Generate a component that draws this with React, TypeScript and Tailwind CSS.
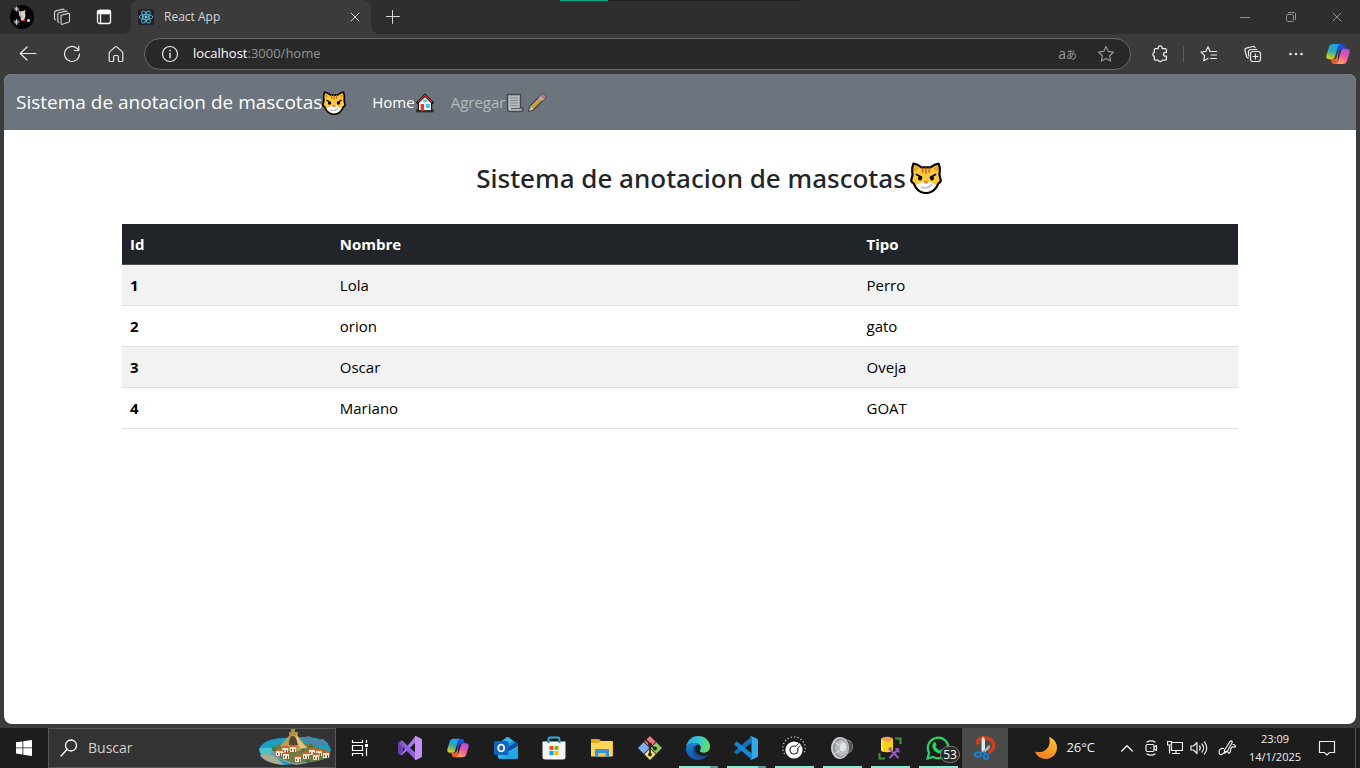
import React from "react";

type IconProps = { className?: string };

const line = {
  fill: "none",
  stroke: "currentColor",
  strokeLinecap: "round" as const,
  strokeLinejoin: "round" as const,
};

/* ---------- Emoji drawings ---------- */

function CatEmoji({ className }: IconProps) {
  return (
    <svg viewBox="0 0 32 32" className={className} role="img" aria-label="gato">
      <path
        d="M3.4 1.6C2 5 2 9 2.6 12.2L1.2 18.6c.4 1.4 1.4 2.2 2.4 2.8C6 27.4 10.800 31 16 31s10-3.600 12.400-9.600c1-.6 2-1.400 2.400-2.800l-1.400-6.400C30 9 30 5 28.600 1.600c-3.200.2-6 2-8.200 3.800h-8.800C9.400 3.600 6.600 1.800 3.400 1.600Z"
        fill="#ffc83d"
        stroke="#000"
        strokeWidth="2.200"
        strokeLinejoin="round"
      />
      <path d="M4.600 3.400c-.6 2.600-.5 4.600-.1 6.600L9 6.300C7.600 5 6.200 4 4.600 3.400ZM27.400 3.400c.6 2.600.5 4.600.1 6.600L23 6.300c1.400-1.300 2.800-2.300 4.400-2.900Z" fill="#f59f1e" />
      <path d="M16 19.500c2 0 3.600 0 5 1 2 1.400 3.800 1.600 5 2.400C23.600 27.400 20 29.800 16 29.800S8.400 27.400 6 22.900c1.200-.8 3-1 5-2.400 1.400-1 3-1 5-1Z" fill="#fff" />
      <path d="M16 6v5M12.400 6l.4 4M19.600 6l-.4 4" stroke="#c4701b" strokeWidth="1.700" strokeLinecap="round" />
      <path d="M6.500 12.500l5 2.800M25.500 12.500l-5 2.800" stroke="#000" strokeWidth="1.700" strokeLinecap="round" />
      <ellipse cx="10" cy="16.200" rx="1.900" ry="2.200" fill="#000" />
      <ellipse cx="22" cy="16.200" rx="1.900" ry="2.200" fill="#000" />
      <path d="M13.600 19h4.800c0 1.700-1.100 2.700-2.400 2.700s-2.400-1-2.400-2.700Z" fill="#f5793b" />
      <path d="M11.500 25.200c3.800 1.300 7.800.4 10-2.500" fill="none" stroke="#c4c4c4" strokeWidth="1.800" strokeLinecap="round" />
    </svg>
  );
}

function HouseEmoji({ className }: IconProps) {
  return (
    <svg viewBox="0 0 18 18" className={className} role="img" aria-label="casa">
      <path d="M1.500 15.200h15v1.800h-15z" fill="#16a316" stroke="#000" strokeWidth=".6" />
      <path d="M3 8.500 9 3l6 5.500V16H3Z" fill="#fff" stroke="#000" strokeWidth="1" />
      <path d="M2.200 8.600 9 2l6.800 6.600" fill="none" stroke="#000" strokeWidth="2.200" strokeLinecap="round" />
      <path d="M2.500 8.300 9 2.100l6.500 6.200" fill="none" stroke="#f03a32" strokeWidth="1" />
      <path d="M7.400 5.800h3.200v2.600H7.400zM9.600 10h3.800v3.500H9.600z" fill="#38c9f5" />
      <path d="M5 10h3.200v6H5z" fill="#e33b2e" />
    </svg>
  );
}

function PageEmoji({ className }: IconProps) {
  return (
    <svg viewBox="0 0 18 20" className={className} role="img" aria-label="página">
      <path d="M1.500 1.500h13V15H17c0 2-.6 3.500-2 3.500H4c-1.600 0-2.500-1-2.500-3Z" fill="#b6babd" stroke="#44494e" strokeWidth="1.400" strokeLinejoin="round" />
      <path d="M4 5h8M4 7.500h8M4 10h8M4 12.500h8" stroke="#878d92" strokeWidth="1" />
      <path d="M5 15.500h11.500" stroke="#555b60" strokeWidth="1.200" />
    </svg>
  );
}

function PencilEmoji({ className }: IconProps) {
  return (
    <svg viewBox="0 0 20 20" className={className} role="img" aria-label="lápiz">
      <path d="M1.500 18.500 3.200 13 14.500 1.700c1-.9 2.500-.7 3.300.3.900.9.900 2.100.2 3.200L7 16.600Z" fill="#cb9b3c" stroke="#44494e" strokeWidth="1.400" strokeLinejoin="round" />
      <path d="m13 3.200 3.500 3.500L18 5.200c.9-1.200.6-2.300-.2-3.200-.9-.9-2.200-1.100-3.300-.3Z" fill="#c6747c" />
      <path d="m12 4.200 3.600 3.600 1.300-1.400-3.500-3.500Z" fill="#aeb4b9" />
      <path d="M2 18 3.500 13.500l3 2.900Z" fill="#d4bd94" />
      <path d="m4 13.800 9-9" stroke="#e5b952" strokeWidth="1" />
    </svg>
  );
}

/* ---------- Browser drawings ---------- */

function Avatar({ className }: IconProps) {
  return (
    <svg viewBox="0 0 24 24" className={className} aria-hidden="true">
      <circle cx="12" cy="12" r="12" fill="#000" />
      <path d="m8.500 5 2 1.500L13 6l2.500-1-.5 3 .5 3-1.500 4.500h-3l-.5-3.500L9 10Z" fill="#d9d2cd" />
      <path d="m9.500 6.500 1.500 4 2 2" stroke="#987" fill="none" strokeWidth=".8" />
      <path d="M12 15.800h3.500" stroke="#c92b2b" strokeWidth="1.200" />
      <path d="M6.500 1.500v5M4 4h5M4.800 2.300l3.400 3.400M8.200 2.300 4.800 5.700M6.500 14v6M3.500 17h6M4.400 15l4.200 4.200M8.600 15l-4.200 4.200" stroke="#cfd0ee" strokeWidth=".9" />
      <circle cx="18.500" cy="15.500" r="1.500" fill="#dfdff2" />
    </svg>
  );
}

function WorkspacesIcon({ className }: IconProps) {
  return (
    <svg viewBox="0 0 18 18" className={className} aria-hidden="true" {...line} strokeWidth="1.100">
      <path d="m8 7.200 7.200-1.800c.8-.2 1.300.2 1.300 1v6.700c0 .6-.3 1-.9 1.200l-6.300 2c-.8.200-1.300-.2-1.300-1Z" />
      <path d="M5.800 14.200c-.6 0-1-.4-1-1V6.500c0-.9.400-1.500 1.300-1.700l6.600-1.700c.7-.1 1.100.1 1.300.5M2.700 11.800c-.8 0-1.200-.5-1.200-1.300V4.700c0-1 .5-1.600 1.400-1.800l6.800-1.700c.7-.1 1.100.1 1.300.5" />
    </svg>
  );
}

function TabActionsIcon({ className }: IconProps) {
  return (
    <svg viewBox="0 0 16 16" className={className} aria-hidden="true" {...line} strokeWidth="1.300">
      <rect x="1.500" y="1.500" width="13" height="13" rx="2" />
      <path d="M1.500 3c0-1 .6-1.500 1.500-1.500h10c1 0 1.500.6 1.500 1.500v1.500h-13Z" fill="currentColor" />
      <path d="M4.500 5v9" />
    </svg>
  );
}

function ReactLogo({ className }: IconProps) {
  return (
    <svg viewBox="0 0 16 16" className={className} aria-hidden="true">
      <rect width="16" height="16" rx="1.500" fill="#20232a" />
      <g fill="none" stroke="#53b9d4" strokeWidth=".9">
        <ellipse cx="8" cy="8" rx="6.800" ry="2.600" />
        <ellipse cx="8" cy="8" rx="6.800" ry="2.600" transform="rotate(60 8 8)" />
        <ellipse cx="8" cy="8" rx="6.800" ry="2.600" transform="rotate(120 8 8)" />
      </g>
      <circle cx="8" cy="8" r="1.400" fill="#61dafb" />
    </svg>
  );
}

function CloseIcon({ className }: IconProps) {
  return (
    <svg viewBox="0 0 12 12" className={className} aria-hidden="true" {...line} strokeWidth="1">
      <path d="m2 2 8 8m0-8-8 8" />
    </svg>
  );
}

function PlusIcon({ className }: IconProps) {
  return (
    <svg viewBox="0 0 14 14" className={className} aria-hidden="true" {...line} strokeWidth="1">
      <path d="M6.500.5v13M0 6.500h13.500" />
    </svg>
  );
}

function MinimizeIcon({ className }: IconProps) {
  return (
    <svg viewBox="0 0 12 12" className={className} aria-hidden="true" {...line} strokeLinecap="butt">
      <path d="M1 6.500h10" />
    </svg>
  );
}

function RestoreIcon({ className }: IconProps) {
  return (
    <svg viewBox="0 0 12 12" className={className} aria-hidden="true" {...line}>
      <rect x="1.500" y="3.500" width="7" height="7" rx="1" />
      <path d="M3.500 1.500H9c1 0 1.500.5 1.500 1.500v5.500" />
    </svg>
  );
}

function BackIcon({ className }: IconProps) {
  return (
    <svg viewBox="0 0 18 18" className={className} aria-hidden="true" {...line} strokeWidth="1.200">
      <path d="M17 8.500H1.500M8 2 1.300 8.500 8 15" />
    </svg>
  );
}

function ReloadIcon({ className }: IconProps) {
  return (
    <svg viewBox="0 0 18 18" className={className} aria-hidden="true" {...line} strokeWidth="1.200">
      <path d="M16.500 9A7.500 7.500 0 1 1 13.800 3.200L15.500 5M15.800 1v4.500h-4.500" />
    </svg>
  );
}

function HomeIcon({ className }: IconProps) {
  return (
    <svg viewBox="0 0 18 18" className={className} aria-hidden="true" {...line} strokeWidth="1.200">
      <path d="M2.200 8c0-.6.200-1 .7-1.400L8.200 1.900c.5-.4 1.100-.4 1.600 0l5.300 4.700c.5.400.7.800.7 1.400v7.400c0 .7-.4 1.100-1.100 1.100h-2.400c-.6 0-.9-.3-.9-.9V12c0-.9-.5-1.500-1.400-1.500H8c-.9 0-1.400.6-1.400 1.500v3.600c0 .6-.3.9-.9.900H3.300c-.7 0-1.100-.4-1.100-1.100Z" />
    </svg>
  );
}

function InfoIcon({ className }: IconProps) {
  return (
    <svg viewBox="0 0 18 18" className={className} aria-hidden="true" {...line} strokeWidth="1.200">
      <circle cx="9" cy="9" r="7.500" />
      <path d="M9 8.200v4.600M9 5.300v.4" strokeWidth="1.400" />
    </svg>
  );
}

function StarIcon({ className }: IconProps) {
  return (
    <svg viewBox="0 0 18 18" className={className} aria-hidden="true" {...line} strokeWidth="1.200">
      <path d="m9 1.500 2.300 4.900 5.200.7-3.800 3.700.9 5.300L9 13.500l-4.600 2.600.9-5.300L1.500 7.100l5.200-.7Z" />
    </svg>
  );
}

function PuzzleIcon({ className }: IconProps) {
  return (
    <svg viewBox="0 0 18 18" className={className} aria-hidden="true" {...line} strokeWidth="1.300">
      <path d="M4.500 3.700h2.700a2.100 2.100 0 1 1 4 0h3c.8 0 1.200.4 1.200 1.200v2.500h-1a1.900 1.900 0 0 0 0 3.800h1v2.700c0 .8-.4 1.200-1.200 1.200h-3a2.100 2.100 0 0 1-4 0H4.500c-.8 0-1.200-.4-1.200-1.200v-2.500a2.100 2.100 0 0 1 0-4V4.900c0-.8.400-1.200 1.200-1.200Z" />
    </svg>
  );
}

function FavoritesIcon({ className }: IconProps) {
  return (
    <svg viewBox="0 0 18 18" className={className} aria-hidden="true" {...line} strokeWidth="1.200">
      <path d="M16.500 6.500H10L8 1.800 5.900 6.300 1 7l3.600 3.600-.9 5.200L8 13.500M11 10h5.500M10.500 13.500h6" />
    </svg>
  );
}

function CollectionsIcon({ className }: IconProps) {
  return (
    <svg viewBox="0 0 18 18" className={className} aria-hidden="true" {...line} strokeWidth="1.200">
      <rect x="6.500" y="6.500" width="10" height="10" rx="2.200" />
      <path d="M11.500 9v5M9 11.500h5M4.500 13c-1 0-1.600-.5-1.900-1.500L1 5.500c-.3-1.200.2-2 1.300-2.300l6.500-1.700c1.100-.3 1.900.1 2.300 1.200M4.500 11V6.800c0-1.400.9-2.300 2.300-2.300H13" />
    </svg>
  );
}

function DotsIcon({ className }: IconProps) {
  return (
    <svg viewBox="0 0 16 16" className={className} aria-hidden="true" fill="currentColor">
      <circle cx="2.500" cy="8" r="1.300" />
      <circle cx="8" cy="8" r="1.300" />
      <circle cx="13.500" cy="8" r="1.300" />
    </svg>
  );
}

function CopilotLogo({ className, id }: IconProps & { id: string }) {
  return (
    <svg viewBox="0 0 24 24" className={className} aria-hidden="true">
      <defs>
        <linearGradient id={id + "a"} x1=".5" y1="0" x2=".2" y2="1">
          <stop offset="0" stopColor="#19a6e8" />
          <stop offset=".45" stopColor="#2ba9b5" />
          <stop offset=".7" stopColor="#86bf51" />
          <stop offset="1" stopColor="#f5cf1b" />
        </linearGradient>
        <linearGradient id={id + "b"} x1=".8" y1="0" x2=".3" y2="1">
          <stop offset="0" stopColor="#a84de0" />
          <stop offset=".5" stopColor="#ed5798" />
          <stop offset="1" stopColor="#ffa463" />
        </linearGradient>
      </defs>
      <path d="M12 2h4.300c1.200 0 1.900.8 2.300 2l1 3h-3c-1.500 0-2.500.7-3 2.200L12 14Z" fill="#1d4fd1" />
      <path d="M12 22H8c-1.300 0-2-.7-2.400-1.800l-1-3h3c1.500 0 2.500-.7 3-2.200L12 9.500Z" fill="#f0592f" />
      <path d="M6.800 2H14c-1.200.4-1.700 1.400-2.100 2.700L8.800 15c-.5 1.600-1.400 2.200-3 2.200H3.200C.8 17.200-.2 15.400.5 13L3 5c.6-2 1.800-3 3.800-3Z" fill={"url(#" + id + "a)"} />
      <path d="M17.200 22H10c1.200-.4 1.700-1.400 2.100-2.700L15.200 9c.5-1.600 1.400-2.200 3-2.200h2.600c2.400 0 3.400 1.800 2.700 4.200L21 19c-.6 2-1.800 3-3.800 3Z" fill={"url(#" + id + "b)"} />
    </svg>
  );
}

/* ---------- Taskbar drawings ---------- */

function WindowsLogo({ className }: IconProps) {
  return (
    <svg viewBox="0 0 16 16" className={className} aria-hidden="true" fill="#fff">
      <path d="M0 2.300 6.500 1.400v6.100H0ZM7.300 1.300 16 0v7.500H7.300ZM0 8.300h6.500v6.200L0 13.600ZM7.300 8.300H16V16l-8.700-1.300Z" />
    </svg>
  );
}

function SearchIcon({ className }: IconProps) {
  return (
    <svg viewBox="0 0 18 18" className={className} aria-hidden="true" {...line} strokeWidth="1.300">
      <circle cx="11" cy="6.500" r="5.500" />
      <path d="M7 10.500 1 17" />
    </svg>
  );
}

function VillagePicture({ className }: IconProps) {
  const houses = [
    [27, 18], [35, 17], [54, 20], [61, 21], [21, 21], [68, 23], [48, 24], [28, 24], [58, 25], [40, 27],
  ];
  return (
    <svg viewBox="0 0 74 38" className={className} aria-hidden="true">
      <path d="M1 20c3-7 12-10.500 24-11l23-1c14 0 23 5 25 13l-3 8-16 4-28 3C13 35 3 28 1 20Z" fill="#1aa0c2" />
      <path d="M1 20c5-2 13-1.500 18 0l-2 5-14 1Z" fill="#4cc2cf" />
      <path d="m43 9 8-2 7 4 7-1 6 5-16 3Z" fill="#4b86ab" />
      <path d="M2 26c6-2 11-1 15 1l9 9-8-1C9 33 4 30 2 26Z" fill="#a9ad94" />
      <path d="M12 22c4 6 12 11 26 14l12-2-26-12Z" fill="#7f9ba2" />
      <path d="m14 19 9-5h24l12 4 13 4v6l-12 4-24 2-14-5Z" fill="#6f7d45" />
      <path d="m22 17 6-7 4-4h7l4 5 6 8-12 4-10-2Z" fill="#bb9b58" />
      <path d="M31 3h2V0h4v3h3v3h-9Z" fill="#b48d3c" />
      <path d="M31 16c0-5 1-9 3.500-9s4.500 3 5.500 9Z" fill="#53472f" />
      <path d="M38 5c2 3 5 9 11 13l-6 2c-3-4-5-9-5-15Z" fill="#e0c67c" />
      {houses.map(([x, y]) => (
        <g key={x}>
          <path d={`M${x - 3} ${y + 1}h6v5h-6z`} fill="#ece1cb" />
          <path d={`m${x - 4} ${y + 1} 2.500-2h4l2 2z`} fill="#d0602f" />
          <path d={`M${x - 2} ${y + 3}h1v2h-1zM${x + 1} ${y + 3}h1v3h-1z`} fill="#72573f" />
        </g>
      ))}
      <circle cx="50" cy="32" r="1.800" fill="#3f6d32" />
      <circle cx="16" cy="20" r="2.200" fill="#487636" />
      <circle cx="53" cy="17" r="2" fill="#487636" />
      <circle cx="45" cy="21" r="1.800" fill="#487636" />
    </svg>
  );
}

function TaskViewIcon({ className }: IconProps) {
  return (
    <svg viewBox="0 0 18 18" className={className} aria-hidden="true" fill="none" stroke="#fff" strokeWidth="1.200">
      <path d="M1.500 1v2.500h10V1M1.500 17v-2.500h10V17M1.500 6.500h10v5h-10zM15.500 1v3M15.500 9v8" />
      <path d="M14 5h3v3h-3z" fill="#fff" stroke="none" />
    </svg>
  );
}

function VisualStudioLogo({ className }: IconProps) {
  return (
    <svg viewBox="0 0 24 24" className={className} aria-hidden="true">
      <path d="M0 6.500 2.500 5 5 6.200v11.300L2.500 19 0 17.500Z" fill="#6940a3" />
      <path d="M2.500 5c.8-.4 1.700-.2 2.500.5L18 17.500V24L2.500 9Z" fill="#8453ca" />
      <path d="M2.500 19 17 .5l1-.5v6L5 18.200c-1 .9-1.700 1.100-2.500.8Z" fill="#a577e8" />
      <path d="M2.500 5c.8-.4 1.700-.2 2.500.5L18 17.500v6.500l-1-.5Z" fill="#9261d6" />
      <path d="m18 0 5 2.400c.7.300 1 .8 1 1.500v16.200c0 .7-.3 1.200-1 1.500L18 24c-.8.200-1 0-1-.7V.7c0-.7.200-.9 1-.7Z" fill="#c490f6" />
    </svg>
  );
}

function OutlookLogo({ className }: IconProps) {
  return (
    <svg viewBox="0 0 24 24" className={className} aria-hidden="true">
      <path d="m4 8 8-6.500c.9-.6 1.600-.6 2.500 0L24 8v4L13 18 4 12Z" fill="#1490df" />
      <path d="m5 7.500 8-6c.7-.4 1.300-.4 2 0L19 5 9 12Z" fill="#36b9f0" />
      <path d="m22.500 6 1.500 2v5l-12 6-4-4Z" fill="#134b9f" />
      <path d="M4 12v9c0 1.300.7 2 2 2h16c1.300 0 2-.7 2-2V10l-12 7Z" fill="#2bc1ef" />
      <path d="M5 22.500 24 11v10c0 1.300-.7 2-2 2H6Z" fill="#1fa8e6" />
      <rect y="5" width="14.500" height="14" rx="1.500" fill="#0f65c0" />
      <ellipse cx="7.200" cy="12" rx="3" ry="3.500" fill="none" stroke="#fff" strokeWidth="1.700" />
    </svg>
  );
}

function StoreLogo({ className }: IconProps) {
  return (
    <svg viewBox="0 0 24 24" className={className} aria-hidden="true">
      <path d="M6.500 6V3c0-1 .5-1.500 1.500-1.500h8c1 0 1.500.5 1.500 1.500v3" fill="none" stroke="#29b4df" strokeWidth="1.800" />
      <path d="M.5 5.500h23V21c0 1.700-1 2.500-2.500 2.500H3C1.500 23.500.5 22.700.5 21Z" fill="#f5f5f5" />
      <path d="M7.500 10h4v4h-4z" fill="#f25022" />
      <path d="M12.500 10h4v4h-4z" fill="#7fba00" />
      <path d="M7.500 15h4v4h-4z" fill="#00a4ef" />
      <path d="M12.500 15h4v4h-4z" fill="#ffb900" />
      <path d="M6.500 5v2M17.500 5v2" stroke="#1685bb" strokeWidth="1.800" />
    </svg>
  );
}

function ExplorerLogo({ className }: IconProps) {
  return (
    <svg viewBox="0 0 24 24" className={className} aria-hidden="true">
      <path d="M1 3h8l2 2h11c.7 0 1 .4 1 1v14H1Z" fill="#e6a514" />
      <path d="M1 7h8l2-2h11.500v15.500H1Z" fill="#ffd45b" />
      <path d="M5 13h14v8h-3.500v-4h-7v4H5Z" fill="#3b93d7" />
      <path d="M8.500 17h7v3.500h-7z" fill="#f4c344" />
    </svg>
  );
}

function GitLogo({ className }: IconProps) {
  return (
    <svg viewBox="0 0 24 24" className={className} aria-hidden="true">
      <path d="m12 0 5.700 5.700-5.700 5.700-5.700-5.700Z" fill="#f17678" />
      <path d="m18.300 6.300 5.700 5.700-5.700 5.700-5.700-5.700Z" fill="#8ccb62" />
      <path d="m12 12.600 5.700 5.700L12 24l-5.700-5.700Z" fill="#f8df75" />
      <path d="m5.700 6.300 5.700 5.700-5.700 5.700L0 12Z" fill="#80adf7" />
      <path d="m8 4 4 4v11m0-11 5 5" fill="none" stroke="#29251f" strokeWidth="1.700" />
      <circle cx="12" cy="8.500" r="1.900" fill="#29251f" />
      <circle cx="12" cy="18.500" r="1.900" fill="#29251f" />
      <circle cx="17" cy="12.500" r="1.900" fill="#29251f" />
    </svg>
  );
}

function EdgeLogo({ className }: IconProps) {
  return (
    <svg viewBox="0 0 24 24" className={className} aria-hidden="true">
      <defs>
        <linearGradient id="edge-top" x1="0" y1=".3" x2="1" y2=".5">
          <stop offset="0" stopColor="#25a8ed" />
          <stop offset=".5" stopColor="#35c5d4" />
          <stop offset="1" stopColor="#6ce259" />
        </linearGradient>
        <linearGradient id="edge-low" x1="0" y1="0" x2="0" y2="1">
          <stop offset="0" stopColor="#1687d7" />
          <stop offset="1" stopColor="#1254aa" />
        </linearGradient>
      </defs>
      <path d="M.2 11C.7 4.800 5.800 0 12 0c7 0 12 5 12 10.500 0 3.800-2.800 6.200-6.200 6.200-2.600 0-4-.9-4-2 0-.8 1-1.200 1-2.800C14.800 9 12 7 8.800 7 5.200 7 1.900 8.500.2 11Z" fill="url(#edge-top)" />
      <path d="M0 12.500C.2 9.300 4.600 7 8.800 7c1.800 0 3.500.6 4.600 1.800C9.500 8.500 7 11 7 14c0 5.500 6 9 11 8.300-1.600 1.100-3.600 1.700-6 1.700C5 24 0 18.700 0 12.500Z" fill="url(#edge-low)" />
      <path d="M10.500 10c-1 1-1.300 2.200-1.300 3.500 0 4.400 4.400 6.500 8.500 6.500 2.200 0 3.800-.9 4.600-1.700-2.400 4-5.500 5.200-8.800 4.600C9 22 6.500 18.500 6.500 14.800c0-2.400 1.600-4.200 4-4.800Z" fill="#174b96" />
    </svg>
  );
}

function VsCodeLogo({ className }: IconProps) {
  return (
    <svg viewBox="0 0 24 24" className={className} aria-hidden="true">
      <path d="M17.500.5v6.300L3.500 18c-.5.400-.9.400-1.300 0L.5 16.500c-.4-.4-.4-.9 0-1.300Z" fill="#0e72c0" />
      <path d="M17.500 23.500v-6.300L3.500 6c-.5-.4-.9-.4-1.300 0L.5 7.500c-.4.4-.4.900 0 1.300Z" fill="#1587d2" />
      <path d="m17.500.2 5.200 2.300c.8.400 1.300 1 1.300 1.900v15.200c0 .9-.5 1.500-1.300 1.900l-5.200 2.300c-.7.200-1.200 0-1.500-.7.900.3 1.500 0 1.500-1V2c0-1-.6-1.300-1.500-1 .3-.7.800-1 1.500-.8Z" fill="#32a8ed" />
    </svg>
  );
}

function GaugeLogo({ className }: IconProps) {
  return (
    <svg viewBox="0 0 24 24" className={className} aria-hidden="true">
      <path d="M2.500 18A11.200 11.200 0 1 1 21.500 18" fill="none" stroke="#d2d2d2" strokeWidth="1.300" strokeDasharray="1.200 2.200" />
      <circle cx="12" cy="14" r="8.600" fill="#fff" />
      <circle cx="12" cy="14" r="4.600" fill="#252525" />
      <path d="m12 14 5.500-5.500" stroke="#252525" strokeWidth="3.400" />
      <path d="m12 14 6-6" stroke="#fff" strokeWidth="1.800" />
      <circle cx="12" cy="14" r="3.400" fill="#fff" />
    </svg>
  );
}

function SpeakerLogo({ className }: IconProps) {
  return (
    <svg viewBox="0 0 24 24" className={className} aria-hidden="true">
      <path d="m9 1 10 3c2.500 1 4 3.500 4 6.500 0 3-1 5-3 6L10 23Z" fill="#8d8f93" />
      <path d="m17 4 5 3v7l-4 3Z" fill="#54565b" />
      <ellipse cx="10" cy="12" rx="9" ry="11" fill="#d2d4d6" />
      <ellipse cx="10.500" cy="12" rx="7.800" ry="9.700" fill="#94979c" />
      <ellipse cx="11.500" cy="12" rx="6.300" ry="8" fill="#b9bcc1" />
      <ellipse cx="13" cy="11" rx="3" ry="4.500" fill="#e4e5e8" />
      <path d="m4 6 7 4M4 18l7-4" stroke="#dfe1e4" />
    </svg>
  );
}

function DatabaseLogo({ className }: IconProps) {
  return (
    <svg viewBox="0 0 24 24" className={className} aria-hidden="true">
      <path d="M17 2.500h5.500V8M1.500 17v5.500H7" fill="none" stroke="#3f9642" strokeWidth="2" />
      <path d="M3 3v11c0 1.300 2.500 2.300 6 2.300s6-1 6-2.300V3Z" fill="#fbd116" />
      <path d="M3 3v11c0 .6.600 1.200 1.800 1.600V3Z" fill="#ffe666" />
      <ellipse cx="9" cy="3" rx="6" ry="2.200" fill="#f5a04e" />
      <path d="m11.500 13 9 9M21 12.500l-9.500 9.500" stroke="#9557bd" strokeWidth="2.200" />
      <path d="m10.500 13.500 3-2M18 12l1 3 3 1" stroke="#9557bd" strokeWidth="1.700" fill="none" />
    </svg>
  );
}

function WhatsAppLogo({ className }: IconProps) {
  return (
    <svg viewBox="0 0 24 24" className={className} aria-hidden="true">
      <path d="m1.500 22.500 1.600-5.600A10.300 10.300 0 1 1 7 20.900Z" fill="none" stroke="#25d366" strokeWidth="2.200" />
      <path d="M8.300 6.200c.7-.3 1.200 0 1.500.8l.7 1.700c.2.500-.4 1.200-1 1.700 1 2 2.300 3.200 4.500 4.100.6-.5 1-1.500 1.600-1.300l2 1c.7.300.5 1 .2 1.700-.7 1.500-2.500 2-4.500 1.500-4.200-1.100-7-4.500-7-7.500 0-1.800 1-3.200 2-3.700Z" fill="#25d366" />
    </svg>
  );
}

function SnippingLogo({ className }: IconProps) {
  return (
    <svg viewBox="0 0 24 24" className={className} aria-hidden="true">
      <path d="M5.500 8.500C3.500 5.500 5 2.500 9 2c6-1 12 2.500 11.500 8-.3 3.500-2.500 5.500-5 6.500" fill="none" stroke="#cf4018" strokeWidth="3.600" />
      <path d="M8.500 3.500 10 .5l2 3V16H8.500Z" fill="#e2e6e8" />
      <path d="M16.500 8.500 17 12l-5.500 5-2-1.500Z" fill="#aeb7bd" />
      <ellipse cx="5" cy="18.500" rx="3" ry="2.200" fill="none" stroke="#1a7fcc" strokeWidth="2" />
      <ellipse cx="13" cy="20.500" rx="2.200" ry="2.600" fill="none" stroke="#1a7fcc" strokeWidth="2" />
      <path d="m7.500 17.500 2-2M12 18l-1-2.500" stroke="#1a7fcc" strokeWidth="2" />
    </svg>
  );
}

function MoonIcon({ className }: IconProps) {
  return (
    <svg viewBox="0 0 24 24" className={className} aria-hidden="true">
      <defs>
        <linearGradient id="moon" x1=".7" y1="0" x2=".2" y2="1">
          <stop offset="0" stopColor="#ffc32e" />
          <stop offset="1" stopColor="#f07820" />
        </linearGradient>
      </defs>
      <path d="M15 1c5 1.500 8 6 8 10.500C23 18 18 23 12 23 6.500 23 2.500 20 1 15.500c3 1 7 1 10.500-1.500C15.500 11 16.500 6 15 1Z" fill="url(#moon)" />
    </svg>
  );
}

function ChevronUpIcon({ className }: IconProps) {
  return (
    <svg viewBox="0 0 12 12" className={className} aria-hidden="true" {...line} strokeWidth="1.300">
      <path d="m.7 9 5.300-5.300L11.300 9" />
    </svg>
  );
}

function MeetIcon({ className }: IconProps) {
  return (
    <svg viewBox="0 0 16 16" className={className} aria-hidden="true" {...line} strokeWidth="1.200">
      <path d="M4 2C6 .400 10 .400 12 2M4 14c2 1.600 6 1.600 8 0" />
      <rect x="3" y="4.500" width="8" height="7" rx="1.500" />
      <path d="m11 7 2.500-1.500v5L11 9" />
      <path d="M7.500 8h.1" />
    </svg>
  );
}

function NetworkIcon({ className }: IconProps) {
  return (
    <svg viewBox="0 0 16 16" className={className} aria-hidden="true" fill="none" stroke="currentColor" strokeWidth="1.200">
      <path d="M5 2.500h10.500v8H4.500V6M5 13.500h8M9 10.500v3M.5 1.500h4v3.500h-4zM2.500 5v8.500" />
    </svg>
  );
}

function VolumeIcon({ className }: IconProps) {
  return (
    <svg viewBox="0 0 18 16" className={className} aria-hidden="true" {...line} strokeWidth="1.200">
      <path d="M1 6v4h2.500L7 13.500v-11L3.500 6ZM9.500 6c1 1.200 1 2.800 0 4M12 4c2 2.300 2 5.700 0 8M14.500 2c3 3.500 3 8.500 0 12" />
    </svg>
  );
}

function PenIcon({ className }: IconProps) {
  return (
    <svg viewBox="0 0 18 18" className={className} aria-hidden="true" {...line} strokeWidth="1.200">
      <path d="m6.500 11 5.500-8.500c1-1.200 2.700-.2 2 1.200L9 12.500l-2.500 1.800ZM5.500 9.500c-2.500-.5-4.500 1-4.500 3.500s2 3.300 3.500 2 2.500-3 4.500-2.500 1 2.500 2.500 1.500.500-4 2-5.500 2.500.500 3.500-.5-.5-2.500-2-2.500" />
    </svg>
  );
}

function NotificationIcon({ className }: IconProps) {
  return (
    <svg viewBox="0 0 18 18" className={className} aria-hidden="true" fill="none" stroke="currentColor" strokeWidth="1.200">
      <path d="M1.500 2.500h15v11h-5L9 16l-2.500-2.500h-5Z" />
    </svg>
  );
}

/* ---------- Page ---------- */

const pets = [
  { id: 1, name: "Lola", kind: "Perro" },
  { id: 2, name: "orion", kind: "gato" },
  { id: 3, name: "Oscar", kind: "Oveja" },
  { id: 4, name: "Mariano", kind: "GOAT" },
];

function BrowserTabs() {
  return (
    <div className="flex h-[34px] bg-[#3b3b3b] text-[#d6d6d6]">
      <div className="flex items-center gap-[17px] rounded-br-lg bg-[#2e2e2e] pl-2.5 pr-[19px]">
        <button aria-label="Perfil"><Avatar className="size-6" /></button>
        <button aria-label="Áreas de trabajo" className="px-0.5"><WorkspacesIcon className="size-[18px]" /></button>
        <button aria-label="Menú de pestañas" className="pl-1.5 text-white"><TabActionsIcon className="size-4" /></button>
      </div>
      <div className="w-60 bg-[#2e2e2e]">
        <div className="flex h-full items-center rounded-t-lg bg-[#3b3b3b] pl-[7px] pr-2.5">
          <ReactLogo className="size-4" />
          <span className="ml-2.5 flex-1 text-xs">React App</span>
          <button aria-label="Cerrar pestaña"><CloseIcon className="size-3" /></button>
        </div>
      </div>
      <div className="flex flex-1 items-center rounded-bl-lg bg-[#2e2e2e] pl-[15px]">
        <button aria-label="Nueva pestaña" className="flex-none"><PlusIcon className="size-3.5" /></button>
        <div className="ml-auto flex items-center gap-[34px] pr-[17px] text-[#8f8f8f]">
          <button aria-label="Minimizar"><MinimizeIcon className="size-3" /></button>
          <button aria-label="Restaurar"><RestoreIcon className="size-3" /></button>
          <button aria-label="Cerrar"><CloseIcon className="size-3" /></button>
        </div>
      </div>
    </div>
  );
}

function AddressBar() {
  return (
    <div className="flex h-10 items-center bg-[#3b3b3b] pl-[19px] pr-2.5 text-[#e8e8e8]">
      <div className="flex items-center gap-[26px]">
        <button aria-label="Atrás"><BackIcon className="size-[18px]" /></button>
        <button aria-label="Actualizar"><ReloadIcon className="size-[18px]" /></button>
        <button aria-label="Inicio"><HomeIcon className="size-[18px]" /></button>
      </div>
      <div className="ml-[19px] flex h-8 flex-1 items-center rounded-full border border-[#696969] bg-[#292929] pl-4 pr-[15px]">
        <button aria-label="Información del sitio"><InfoIcon className="size-[18px]" /></button>
        <div className="ml-3.5 flex-1 text-[13px] text-[#929292]">
          <span className="text-white">localhost</span>:3000/home
        </div>
        <button aria-label="Traducir" className="text-sm leading-4 text-[#969696]">
          a<span className="text-[11px]">あ</span>
        </button>
        <button aria-label="Agregar a favoritos" className="ml-5 text-[#969696]"><StarIcon className="size-[18px]" /></button>
      </div>
      <div className="ml-5 flex items-center">
        <button aria-label="Extensiones"><PuzzleIcon className="size-[18px]" /></button>
        <span className="ml-3.5 h-4 w-px bg-[#606060]" />
        <button aria-label="Favoritos" className="ml-4"><FavoritesIcon className="size-[18px]" /></button>
        <button aria-label="Colecciones" className="ml-[26px]"><CollectionsIcon className="size-[18px]" /></button>
        <button aria-label="Más" className="ml-[26px]"><DotsIcon className="size-4" /></button>
        <button aria-label="Copilot" className="ml-[22px]"><CopilotLogo id="bar" className="size-6" /></button>
      </div>
    </div>
  );
}

function Website() {
  return (
    <main className="mx-1 flex-1 overflow-hidden rounded-lg bg-white text-[#212529]">
      <nav className="flex h-14 items-center bg-[#6c757d] px-3 pt-px text-white">
        <a href="/home" className="flex items-center text-[19px]">
          Sistema de anotacion de mascotas
          <CatEmoji className="size-6" />
        </a>
        <a href="/home" className="ml-[26px] flex items-center text-[15px]">
          Home
          <HouseEmoji className="size-5" />
        </a>
        <a href="/agregar" className="ml-4 flex items-center text-[15px] text-[#b5babe]">
          Agregar
          <PageEmoji className="size-5" />
          <PencilEmoji className="ml-0.5 size-5" />
        </a>
      </nav>
      <h1 className="mt-7 flex items-center justify-center gap-1 pl-[58px] font-['Noto_Sans',sans-serif] text-[26px] leading-10 font-medium">
        Sistema de anotacion de mascotas
        <CatEmoji className="size-8" />
      </h1>
      <div className="mx-auto mt-[26px] max-w-[1140px] px-3">
        <table className="w-full table-fixed border-separate border-spacing-0 text-left text-[15px] leading-6 text-black">
          <thead className="bg-[#212529] text-white">
            <tr>
              <th className="w-[18.8%] border-b border-[#4d5154] p-2">Id</th>
              <th className="w-[47.2%] border-b border-[#4d5154] p-2">Nombre</th>
              <th className="border-b border-[#4d5154] p-2">Tipo</th>
            </tr>
          </thead>
          <tbody>
            {pets.map((pet) => (
              <tr key={pet.id} className="odd:bg-[#f2f2f2]">
                <th scope="row" className="border-b border-[#dee2e6] p-2">{pet.id}</th>
                <td className="border-b border-[#dee2e6] p-2">{pet.name}</td>
                <td className="border-b border-[#dee2e6] p-2">{pet.kind}</td>
              </tr>
            ))}
          </tbody>
        </table>
      </div>
    </main>
  );
}

type TaskApp = {
  name: string;
  icon: React.ReactNode;
  open?: boolean;
  stacked?: boolean;
  active?: boolean;
  badge?: string;
};

const apps: TaskApp[] = [
  { name: "Visual Studio", icon: <VisualStudioLogo className="size-6" /> },
  { name: "Copilot", icon: <CopilotLogo id="task" className="size-[22px]" /> },
  { name: "Outlook", icon: <OutlookLogo className="size-6" /> },
  { name: "Microsoft Store", icon: <StoreLogo className="size-6" /> },
  { name: "Explorador de archivos", icon: <ExplorerLogo className="size-6" /> },
  { name: "Git", icon: <GitLogo className="size-6" /> },
  { name: "Edge", icon: <EdgeLogo className="size-6" />, open: true, stacked: true },
  { name: "Visual Studio Code", icon: <VsCodeLogo className="size-6" />, open: true, stacked: true },
  { name: "Rendimiento", icon: <GaugeLogo className="size-6" />, open: true },
  { name: "Sonido", icon: <SpeakerLogo className="size-6" />, open: true },
  { name: "Base de datos", icon: <DatabaseLogo className="size-6" />, open: true },
  { name: "WhatsApp", icon: <WhatsAppLogo className="size-6" />, open: true, badge: "53" },
  { name: "Recortes", icon: <SnippingLogo className="size-6" />, active: true },
];

function TaskButton({ app }: { app: TaskApp }) {
  return (
    <button
      aria-label={app.name}
      className={"relative flex h-10 flex-col items-center " + (app.active ? "w-[46px] bg-[#4b4b4b]" : "w-12")}
    >
      <span className="flex flex-1 items-center pt-0.5">{app.icon}</span>
      <span className="flex h-0.5 w-full pr-1 pl-[5px]">
        {app.open && <span className="flex-1 bg-[#8de5d2]" />}
        {app.stacked && <span className="w-2 bg-[#5f9f93]" />}
      </span>
      {app.badge && (
        <span className="absolute top-[18px] right-0.5 flex h-[17px] w-5 items-center justify-center rounded-full border border-[#777] bg-[#2b2b2b] text-xs text-white">
          {app.badge}
        </span>
      )}
    </button>
  );
}

function Taskbar() {
  return (
    <footer className="mt-1 flex h-10 items-center bg-[#1d1d1d] text-white">
      <button aria-label="Inicio de Windows" className="flex h-10 w-12 items-center justify-center">
        <WindowsLogo className="size-4" />
      </button>
      <label className="flex h-10 w-72 items-center border border-[#575757] bg-[#333] pr-[3px] pl-[11px]">
        <SearchIcon className="size-[18px] flex-none" />
        <input
          type="search"
          aria-label="Buscar"
          placeholder="Buscar"
          className="ml-2.5 min-w-0 flex-1 bg-transparent text-sm outline-none placeholder:text-[#d0d0d0]"
        />
        <VillagePicture className="h-[38px] w-[74px] flex-none" />
      </label>
      <button aria-label="Vista de tareas" className="flex h-10 w-12 items-center justify-center">
        <TaskViewIcon className="size-[18px]" />
      </button>
      <div className="flex pl-0.5">
        {apps.map((app) => (
          <TaskButton key={app.name} app={app} />
        ))}
      </div>
      <div className="ml-auto flex h-10 items-center text-[#f0f0f0]">
        <MoonIcon className="size-6" />
        <span className="ml-2 text-[13px]">26°C</span>
        <button aria-label="Iconos ocultos" className="ml-[26px]"><ChevronUpIcon className="size-3" /></button>
        <button aria-label="Reunirse ahora" className="ml-2.5"><MeetIcon className="size-4" /></button>
        <button aria-label="Red" className="ml-2"><NetworkIcon className="size-4" /></button>
        <button aria-label="Volumen" className="ml-[7px]"><VolumeIcon className="h-4 w-[18px]" /></button>
        <button aria-label="Lápiz" className="ml-2.5"><PenIcon className="size-[18px]" /></button>
        <time className="ml-3 w-[54px] text-center text-[11px] leading-[18px]">
          <span className="block">23:09</span>
          <span className="block">14/1/2025</span>
        </time>
        <button aria-label="Notificaciones" className="mr-[19px] ml-4"><NotificationIcon className="size-[18px]" /></button>
        <span className="mr-1 h-full w-px bg-[#555]" />
      </div>
    </footer>
  );
}

export default function App() {
  return (
    <div className="relative flex min-h-screen flex-col bg-[#3b3b3b] font-['Open_Sans','Noto_Sans_CJK_JP',sans-serif]">
      <div className="absolute top-0 left-1/2 flex h-px w-60 -translate-x-1/2 bg-[#202020]">
        <span className="w-12 bg-[#00ad88]" />
      </div>
      <BrowserTabs />
      <AddressBar />
      <Website />
      <Taskbar />
    </div>
  );
}
